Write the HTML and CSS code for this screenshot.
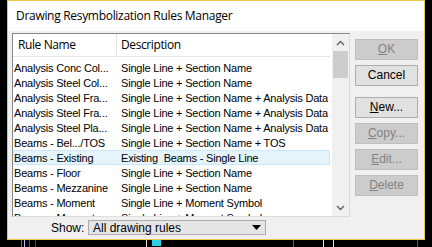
FILE: index.html
```html
<!DOCTYPE html>
<html lang="en">
<head>
  <meta charset="UTF-8">
  <title>Drawing Resymbolization Rules Manager</title>
  <link rel="stylesheet" href="styles.css">
</head>
<body>
  <div class="window">
    <div class="titlebar">Drawing Resymbolization Rules Manager</div>
    <div class="client">
      <div class="left">
        <div class="listbox">
          <div class="table">
            <div class="header">
              <div class="col-name">Rule Name</div>
              <div class="col-desc">Description</div>
            </div>
            <div class="rows">
              <div class="row"><span class="c1">Analysis Conc Col...</span><span class="c2">Single Line + Section Name</span></div>
              <div class="row"><span class="c1">Analysis Steel Col...</span><span class="c2">Single Line + Section Name</span></div>
              <div class="row"><span class="c1">Analysis Steel Fra...</span><span class="c2">Single Line + Section Name + Analysis Data</span></div>
              <div class="row"><span class="c1">Analysis Steel Fra...</span><span class="c2">Single Line + Section Name + Analysis Data</span></div>
              <div class="row"><span class="c1">Analysis Steel Pla...</span><span class="c2">Single Line + Section Name + Analysis Data</span></div>
              <div class="row"><span class="c1">Beams - Bel.../TOS</span><span class="c2">Single Line + Section Name + TOS</span></div>
              <div class="row selected"><span class="c1">Beams - Existing</span><span class="c2">Existing&nbsp; Beams - Single Line</span></div>
              <div class="row"><span class="c1">Beams - Floor</span><span class="c2">Single Line + Section Name</span></div>
              <div class="row"><span class="c1">Beams - Mezzanine</span><span class="c2">Single Line + Section Name</span></div>
              <div class="row"><span class="c1">Beams - Moment</span><span class="c2">Single Line + Moment Symbol</span></div>
              <div class="row"><span class="c1">Beams - Moment...</span><span class="c2">Single Line + Moment Symbol</span></div>
            </div>
          </div>
          <div class="scrollbar">
            <div class="arrow">
              <svg width="9" height="6" viewBox="0 0 9 6"><path d="M1 5 L4.5 1.5 L8 5" fill="none" stroke="#606060" stroke-width="1.4"/></svg>
            </div>
            <div class="thumb"></div>
            <div class="track"></div>
            <div class="arrow">
              <svg width="9" height="6" viewBox="0 0 9 6"><path d="M1 1 L4.5 4.5 L8 1" fill="none" stroke="#606060" stroke-width="1.4"/></svg>
            </div>
          </div>
        </div>
        <div class="show">
          <span class="show-label">Show:</span>
          <div class="combo">
            <span>All drawing rules</span>
            <svg width="9" height="5" viewBox="0 0 9 5"><path d="M0 0 H9 L4.5 5 Z" fill="#000"/></svg>
          </div>
        </div>
      </div>
      <div class="buttons">
        <div class="btn disabled"><u>O</u>K</div>
        <div class="btn">Cancel</div>
        <div class="btn gap"><u>N</u>ew...</div>
        <div class="btn disabled"><u>C</u>opy...</div>
        <div class="btn disabled"><u>E</u>dit...</div>
        <div class="btn disabled"><u>D</u>elete</div>
      </div>
    </div>
  </div>
  <!-- drawing behind the dialog -->
  <svg class="canvas" width="432" height="7" viewBox="0 0 432 7">
    <path d="M21.5 0 V7" stroke="#7a5ad0"/>
    <path d="M24.5 0 V7" stroke="#c8b8f0"/>
    <path d="M29.5 0 V7" stroke="#6a3aa0"/>
    <path d="M35.5 0 V7" stroke="#b02020"/>
    <path d="M146.5 0 V7" stroke="#e0e0e0"/>
    <rect x="152" y="0" width="9" height="6" fill="#30d0e0"/>
    <path d="M293.5 0 V7" stroke="#606060"/>
    <path d="M323.5 0 V7" stroke="#e0e0e0"/>
    <path d="M333.5 0 V7" stroke="#e0e0e0"/>
    <path d="M417.5 0 V7" stroke="#a020a0"/>
  </svg>
</body>
</html>
```

FILE: styles.css
```css
body {
  margin: 0;
  width: 432px;
  height: 247px;
  overflow: hidden;
  background-color: #000;
  font-family: "Liberation Sans", Arial, sans-serif;
}
.window {
  margin-left: 7px;
  width: 416px;
  height: 238px;
  border: 1px solid #e9c84a;
  background-color: #f0f0f0;
}
.canvas {
  display: block;
}
.titlebar {
  height: 30px;
  line-height: 30px;
  padding-left: 8px;
  background-color: #fff;
  font-family: "Open Sans", sans-serif;
  font-size: 12px;
  letter-spacing: -0.3px;
  color: #000;
}
.client {
  display: flex;
  padding: 2px 0 0 4px;
}
.left {
  width: 338px;
}
.listbox {
  display: flex;
  height: 182px;
  border: 1px solid #828790;
  border-right-color: #dcdcdc;
  border-bottom-color: #dcdcdc;
  background-color: #fff;
  overflow: hidden;
}
.table {
  flex: 1;
  overflow: hidden;
}
.header {
  display: flex;
  height: 22px;
  border-bottom: 1px solid #e5e5e5;
  font-family: "Open Sans", sans-serif;
  font-size: 12px;
  letter-spacing: -0.4px;
  line-height: 22px;
}
.col-name {
  width: 98px;
  flex-shrink: 0;
  padding-left: 5px;
  border-right: 1px solid #e5e5e5;
}
.col-desc {
  padding-left: 4px;
}
.rows {
  padding-top: 3px;
}
.row {
  display: flex;
  height: 15px;
  line-height: 15px;
  font-size: 11px;
  letter-spacing: -0.2px;
  white-space: nowrap;
  box-sizing: border-box;
  border: 1px solid transparent;
  border-left: none;
}
.row.selected {
  background-color: #e5f3fb;
  border-color: #cce8ff;
}
.c1 {
  width: 107px;
  flex-shrink: 0;
  padding-left: 1px;
  overflow: hidden;
}
.scrollbar {
  width: 17px;
  flex-shrink: 0;
  margin-left: 2px;
  display: flex;
  flex-direction: column;
  background-color: #f0f0f0;
}
.arrow {
  height: 17px;
  display: flex;
  align-items: center;
  justify-content: center;
}
.thumb {
  height: 27px;
  margin: 0 1px;
  background-color: #cdcdcd;
}
.track {
  flex: 1;
}
.show {
  display: flex;
  align-items: center;
  margin-top: 3px;
  font-size: 12px;
}
.show-label {
  margin-left: 39px;
  width: 37px;
}
.combo {
  display: flex;
  align-items: center;
  justify-content: space-between;
  width: 168px;
  height: 13px;
  padding: 0 4px;
  border: 1px solid #acacac;
  background-color: #e5e5e5;
}
.buttons {
  margin-left: 5px;
  margin-top: 6px;
  display: flex;
  flex-direction: column;
  gap: 5px;
}
.btn {
  width: 61px;
  height: 19px;
  line-height: 19px;
  text-align: center;
  font-size: 12px;
  color: #000;
  background-color: #e1e1e1;
  border: 1px solid #adadad;
}
.btn.disabled {
  color: #838383;
  background-color: #cccccc;
  border-color: #bfbfbf;
}
.btn.gap {
  margin-top: 6px;
}
```
